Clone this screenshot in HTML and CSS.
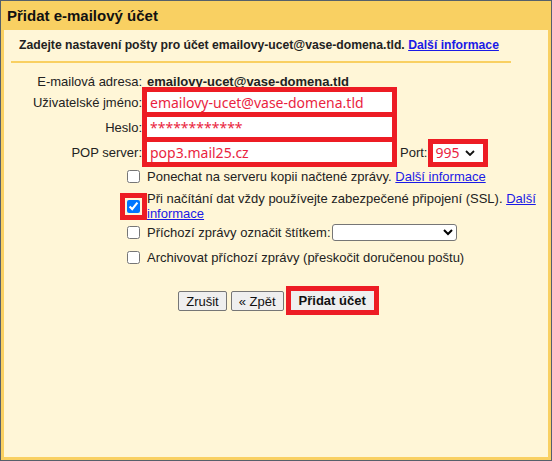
FILE: index.html
```html
<!DOCTYPE html>
<html lang="cs">
<head>
    <meta charset="UTF-8">
    <meta name="viewport" content="width=device-width, initial-scale=1.0">
    <title>Přidat e-mailový účet</title>
    <link rel="stylesheet" href="styles.css">
</head>
<body>
    <div class="window">
        <h1 class="window-title">Přidat e-mailový účet</h1>

        <div class="panel">
            <div class="intro">
                Zadejte nastavení pošty pro účet emailovy-ucet@vase-domena.tld. <a href="#">Další informace</a>
            </div>

            <div class="fields">
                <div class="field field-static">
                    <label class="field-label">E-mailová adresa:</label>
                    <span class="field-value">emailovy-ucet@vase-domena.tld</span>
                </div>
                <div class="field">
                    <label class="field-label" for="user">Uživatelské jméno:</label>
                    <input class="text-input marked" id="user" type="text" value="emailovy-ucet@vase-domena.tld">
                </div>
                <div class="field">
                    <label class="field-label" for="pass">Heslo:</label>
                    <input class="text-input marked" id="pass" type="text" value="************">
                </div>
                <div class="field">
                    <label class="field-label" for="server">POP server:</label>
                    <input class="text-input marked" id="server" type="text" value="pop3.mail25.cz">
                    <label class="port-label" for="port">Port:</label>
                    <span class="select-wrap marked">
                        <select class="port-select" id="port">
                            <option>995</option>
                            <option>110</option>
                        </select>
                        <svg class="chevron" width="10" height="6" viewBox="0 0 10 6">
                            <path d="M1 1l4 4 4-4" fill="none" stroke="#111" stroke-width="1.8"/>
                        </svg>
                    </span>
                </div>
            </div>

            <div class="options">
                <label class="option">
                    <input type="checkbox">
                    <span>Ponechat na serveru kopii načtené zprávy. <a href="#">Další informace</a></span>
                </label>
                <label class="option option-ssl">
                    <span class="check-mark"><input type="checkbox" checked></span>
                    <span>Při načítání dat vždy používejte zabezpečené připojení (SSL). <a href="#">Další informace</a></span>
                </label>
                <label class="option option-label">
                    <input type="checkbox">
                    <span>Příchozí zprávy označit štítkem:</span>
                    <select class="label-select">
                        <option></option>
                    </select>
                </label>
                <label class="option option-archive">
                    <input type="checkbox">
                    <span>Archivovat příchozí zprávy (přeskočit doručenou poštu)</span>
                </label>
            </div>

            <div class="actions">
                <button type="button">Zrušit</button>
                <button type="button">« Zpět</button>
                <button type="button" class="primary marked">Přidat účet</button>
            </div>
        </div>
    </div>
</body>
</html>
```

FILE: styles.css
```css
:root {
    --frame: #f9d062;
    --panel: #fff6d7;
    --mark: #ed1c24;
    --typed: #ea1f3f;
    --link: #1a1ae6;
}

* {
    box-sizing: border-box;
}

body {
    margin: 0;
    font-family: 'Liberation Sans', Arial, sans-serif;
    font-size: 13px;
    color: #222;
}

a {
    color: var(--link);
}

.window {
    width: 552px;
    height: 461px;
    border: 1px solid #56606b;
    background-color: var(--frame);
    padding: 0 3px 3px;
    display: flex;
    flex-direction: column;
}

.window-title {
    margin: 0;
    height: 29px;
    line-height: 30px;
    padding-left: 3px;
    font-size: 15px;
    font-weight: bold;
    color: #111;
}

.panel {
    flex: 1;
    background-color: var(--panel);
}

.intro {
    width: 500px;
    margin-left: 7px;
    padding: 8px 0 8px 8px;
    line-height: 15px;
    font-size: 12.2px;
    font-weight: bold;
    white-space: nowrap;
    border-bottom: 2px solid var(--frame);
}

/* nastavení účtu */
.fields {
    padding-top: 8px;
    display: flex;
    flex-direction: column;
    gap: 5px;
}

.field {
    display: flex;
    align-items: center;
    height: 20px;
}

.field-static {
    margin-bottom: -4px;
}

.field-label {
    width: 138px;
    margin-right: 5px;
    text-align: right;
}

.field-value {
    font-weight: bold;
}

.marked {
    outline: 5px solid var(--mark);
    border-radius: 0;
}

.text-input {
    width: 245px;
    height: 20px;
    border: 0;
    padding: 0 3px;
    background: #fff;
    font-family: 'Noto Sans', 'Open Sans', sans-serif;
    font-size: 14px;
    color: var(--typed);
}

.port-label {
    margin-left: 8px;
}

.select-wrap {
    position: relative;
    display: flex;
    margin-left: 6px;
    margin-top: 2px;
}

.port-select {
    width: 50px;
    height: 18px;
    border: 0;
    border-radius: 0;
    padding: 0 0 0 2px;
    background: #fff;
    appearance: none;
    font-family: 'Noto Sans', 'Open Sans', sans-serif;
    font-size: 14px;
    line-height: 18px;
    color: var(--typed);
}

.chevron {
    position: absolute;
    right: 8px;
    top: 6px;
    pointer-events: none;
}

/* volby */
.options {
    margin-top: 7px;
    padding-left: 123px;
    padding-right: 12px;
}

.option {
    display: flex;
    align-items: center;
    line-height: 15px;
}

.option input[type="checkbox"] {
    width: 13px;
    height: 13px;
    margin: 0 7px 0 0;
    flex-shrink: 0;
}

.option-ssl {
    margin-top: 7px;
}

.check-mark {
    display: flex;
    margin-right: 7px;
    outline: 5px solid var(--mark);
    outline-offset: 2px;
}

.check-mark input[type="checkbox"] {
    margin: 0;
}

.option-label {
    margin-top: 3px;
}

.label-select {
    width: 125px;
    height: 17px;
    margin: 0 0 0 1px;
    border: 1px solid #767676;
    border-radius: 3px;
    background: #fff;
    font-size: 13px;
}

.option-archive {
    margin-top: 9px;
}

/* tlačítka */
.actions {
    margin-top: 26px;
    display: flex;
    justify-content: center;
    gap: 4px;
}

.actions button {
    height: 20px;
    padding: 0 7px;
    font-family: 'Liberation Sans', Arial, sans-serif;
    font-size: 13px;
    color: #111;
    background-color: #efefef;
    border: 1px solid #767676;
    border-radius: 2px;
}

.actions .primary {
    margin-left: 3px;
    height: 19px;
    padding: 0 8px;
    border: 0;
    border-radius: 0;
    font-weight: bold;
}
```
